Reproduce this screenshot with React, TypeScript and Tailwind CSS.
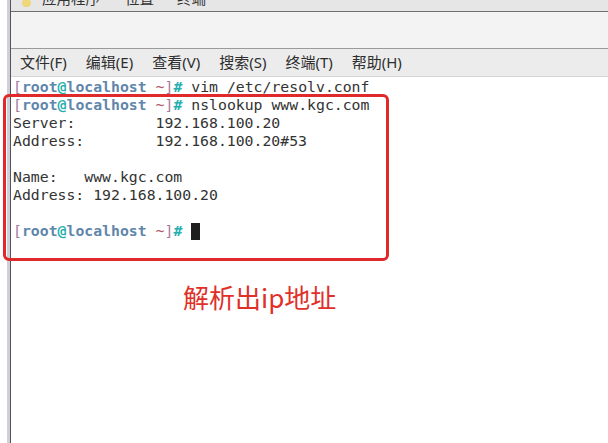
const mono = { fontFamily: '"DejaVu Sans Mono", "Liberation Mono", monospace' };

const Prompt = () => (
    <>
        <span className="text-[#a57b9c]">[</span>
        <span className="font-bold text-[#5f86ab]">root</span>
        <span className="font-bold text-[#25aeb0]">@</span>
        <span className="font-bold text-[#5f86ab]">localhost</span>
        <span className="text-[#b05a6a]"> ~</span>
        <span className="text-[#a57b9c]">]</span>
        <span className="font-bold text-[#25aeb0]">#</span>{' '}
    </>
);

const menus = ['文件(F)', '编辑(E)', '查看(V)', '搜索(S)', '终端(T)', '帮助(H)'];

export default function App() {
    return (
        <div
            className="relative flex w-[608px] h-[443px] overflow-hidden bg-white"
            style={{ fontFamily: '"Noto Sans", "Noto Sans CJK SC", sans-serif' }}
        >
            {/* left edge of window */}
            <div className="flex w-[11px] shrink-0">
                <div className="w-[7px] bg-white" />
                <div className="w-[3px] bg-[#cfcfdc]" />
                <div className="w-[1px] bg-[#555]" />
            </div>

            <div className="flex flex-col flex-1">
                {/* top panel, cut off */}
                <div className="h-[12px] bg-[#e6e6e6] border-b border-[#6e6e6e] overflow-hidden">
                    <div className="flex items-center text-[14.5px] text-[#333] -mt-[12px] pl-[11px]">
                        <span className="w-[9px] h-[8px] rounded-full bg-[#efd77a] mt-[8px]" />
                        <span className="ml-[11px]">应用程序</span>
                        <span className="ml-[25px]">位置</span>
                        <span className="ml-[23px]">终端</span>
                    </div>
                </div>

                {/* title / toolbar */}
                <div className="h-[37px] bg-[#f3f3f3] border-b border-[#9a9a9a]" />

                {/* menu bar */}
                <div className="h-[28px] bg-[#ececec] border-b border-[#d6d6d6] flex items-center gap-[19px] pl-[9px] text-[15px] text-[#2e2e2e]">
                    {menus.map((m) => (
                        <span key={m}>{m}</span>
                    ))}
                </div>

                {/* terminal */}
                <pre className="flex-1 bg-white pl-[2px] pt-[1px] text-[14.8px] leading-[18px] text-[#333]" style={mono}>
                    <div><Prompt />vim /etc/resolv.conf</div>
                    <div><Prompt />nslookup www.kgc.com</div>
                    <div>{'Server:         192.168.100.20'}</div>
                    <div>{'Address:        192.168.100.20#53'}</div>
                    <div>&nbsp;</div>
                    <div>{'Name:   www.kgc.com'}</div>
                    <div>{'Address: 192.168.100.20'}</div>
                    <div>&nbsp;</div>
                    <div className="flex items-center">
                        <span><Prompt /></span>
                        <span className="inline-block w-[9px] h-[17px] bg-[#1e1e1e]" />
                    </div>
                </pre>
            </div>

            {/* red annotation */}
            <div className="absolute left-[3px] top-[94px] w-[386px] h-[167px] border-[3px] border-[#e0292b] rounded-[6px]" />
            <div
                className="absolute left-[183px] top-[277px] text-[26px] text-[#e0302a]"
                style={{ fontFamily: '"Noto Sans CJK SC", "Noto Sans", sans-serif' }}
            >
                解析出ip地址
            </div>
        </div>
    );
}
